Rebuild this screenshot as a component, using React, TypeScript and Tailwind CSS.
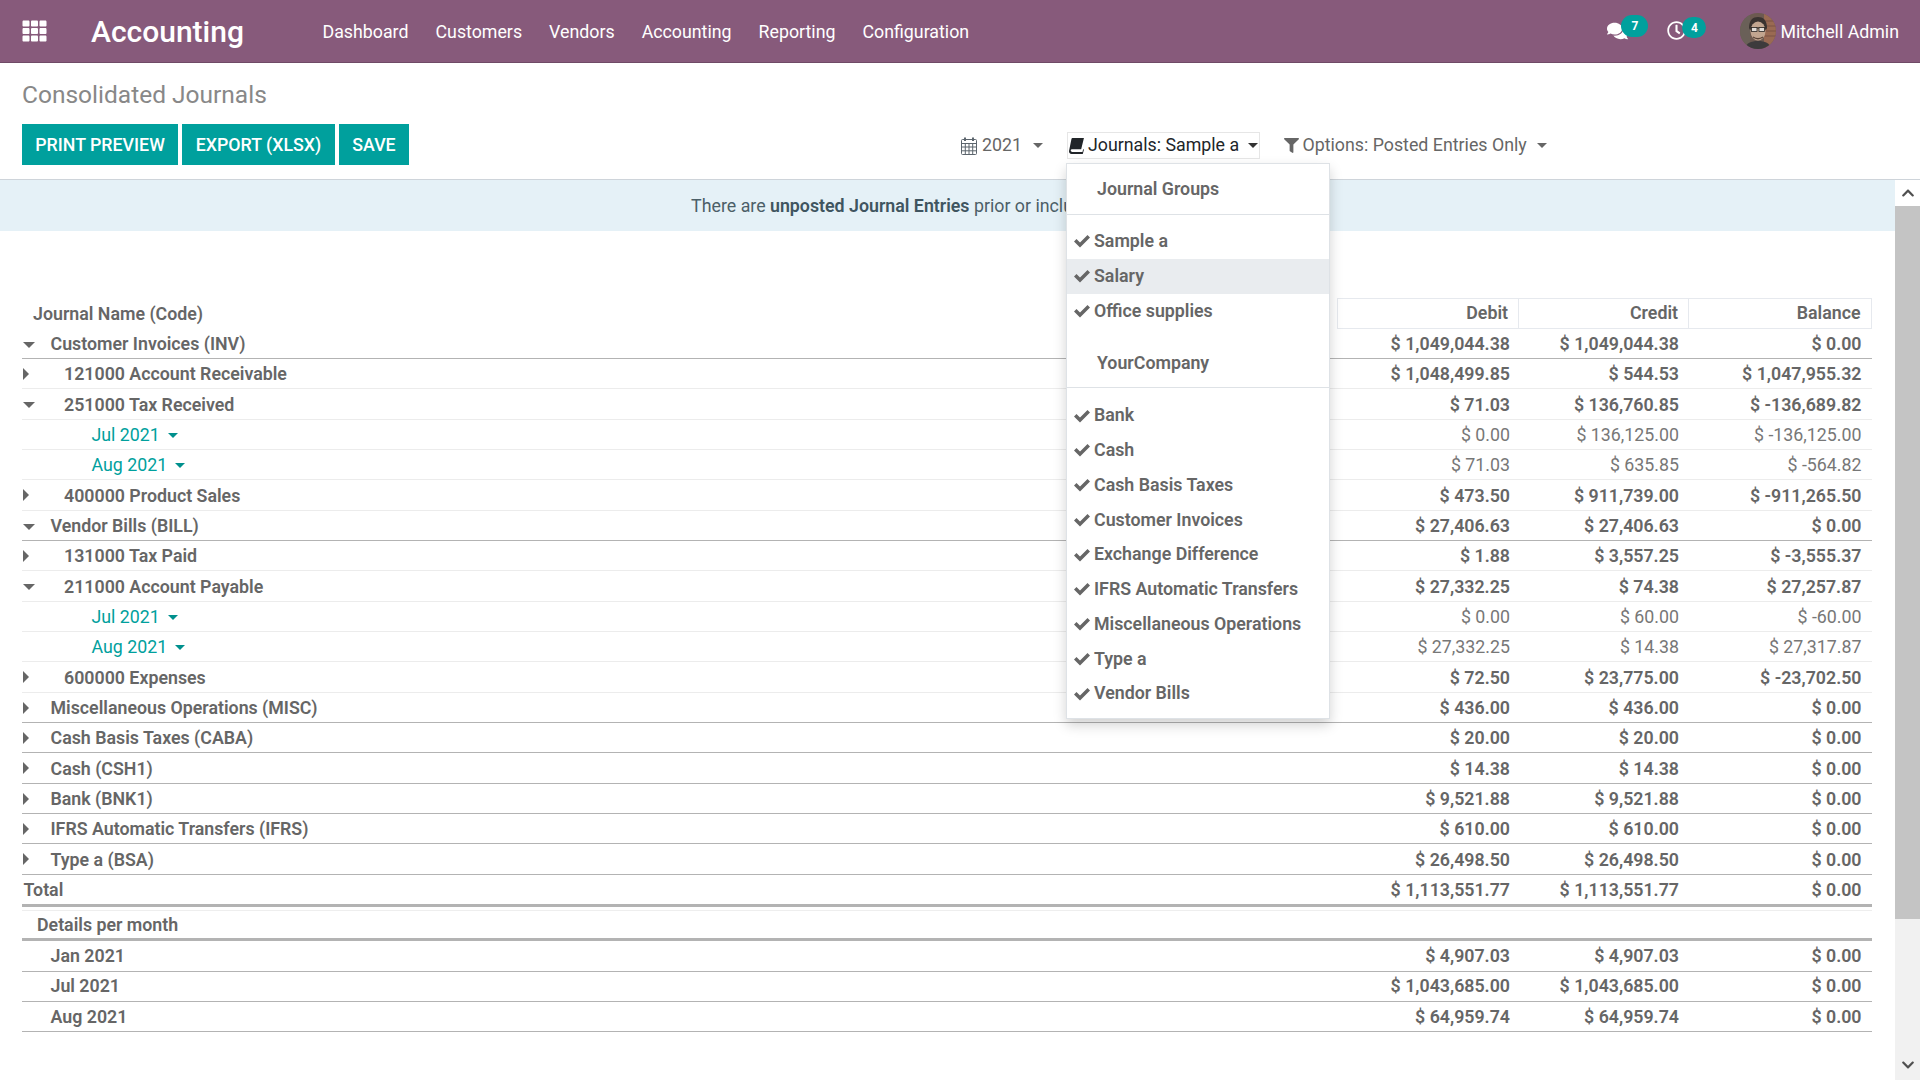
import React from "react";
import { FaTh, FaFilter, FaComments, FaRegClock, FaChevronUp, FaChevronDown } from "react-icons/fa";

type Row = {
  name: string; d: string; c: string; b: string; level: 0 | 1 | 2 | 3;
  caret?: "down" | "right"; line: "dark" | "light" | "thick"; plain?: boolean;
};

const rows: Row[] = [
  { name: "Customer Invoices (INV)", d: "$ 1,049,044.38", c: "$ 1,049,044.38", b: "$ 0.00", level: 0, caret: "down", line: "dark" },
  { name: "121000 Account Receivable", d: "$ 1,048,499.85", c: "$ 544.53", b: "$ 1,047,955.32", level: 1, caret: "right", line: "light" },
  { name: "251000 Tax Received", d: "$ 71.03", c: "$ 136,760.85", b: "$ -136,689.82", level: 1, caret: "down", line: "light" },
  { name: "Jul 2021", d: "$ 0.00", c: "$ 136,125.00", b: "$ -136,125.00", level: 2, line: "light", plain: true },
  { name: "Aug 2021", d: "$ 71.03", c: "$ 635.85", b: "$ -564.82", level: 2, line: "light", plain: true },
  { name: "400000 Product Sales", d: "$ 473.50", c: "$ 911,739.00", b: "$ -911,265.50", level: 1, caret: "right", line: "light" },
  { name: "Vendor Bills (BILL)", d: "$ 27,406.63", c: "$ 27,406.63", b: "$ 0.00", level: 0, caret: "down", line: "dark" },
  { name: "131000 Tax Paid", d: "$ 1.88", c: "$ 3,557.25", b: "$ -3,555.37", level: 1, caret: "right", line: "light" },
  { name: "211000 Account Payable", d: "$ 27,332.25", c: "$ 74.38", b: "$ 27,257.87", level: 1, caret: "down", line: "light" },
  { name: "Jul 2021", d: "$ 0.00", c: "$ 60.00", b: "$ -60.00", level: 2, line: "light", plain: true },
  { name: "Aug 2021", d: "$ 27,332.25", c: "$ 14.38", b: "$ 27,317.87", level: 2, line: "light", plain: true },
  { name: "600000 Expenses", d: "$ 72.50", c: "$ 23,775.00", b: "$ -23,702.50", level: 1, caret: "right", line: "light" },
  { name: "Miscellaneous Operations (MISC)", d: "$ 436.00", c: "$ 436.00", b: "$ 0.00", level: 0, caret: "right", line: "dark" },
  { name: "Cash Basis Taxes (CABA)", d: "$ 20.00", c: "$ 20.00", b: "$ 0.00", level: 0, caret: "right", line: "dark" },
  { name: "Cash (CSH1)", d: "$ 14.38", c: "$ 14.38", b: "$ 0.00", level: 0, caret: "right", line: "dark" },
  { name: "Bank (BNK1)", d: "$ 9,521.88", c: "$ 9,521.88", b: "$ 0.00", level: 0, caret: "right", line: "dark" },
  { name: "IFRS Automatic Transfers (IFRS)", d: "$ 610.00", c: "$ 610.00", b: "$ 0.00", level: 0, caret: "right", line: "dark" },
  { name: "Type a (BSA)", d: "$ 26,498.50", c: "$ 26,498.50", b: "$ 0.00", level: 0, caret: "right", line: "dark" },
  { name: "Total", d: "$ 1,113,551.77", c: "$ 1,113,551.77", b: "$ 0.00", level: 3, line: "thick" },
];

const months: [string, string, string][] = [
  ["Jan 2021", "$ 4,907.03", "$ 0.00"],
  ["Jul 2021", "$ 1,043,685.00", "$ 0.00"],
  ["Aug 2021", "$ 64,959.74", "$ 0.00"],
];

function CaretDown({ className = "" }: { className?: string }) {
  return <span className={`inline-block w-0 h-0 border-x-[5px] border-t-[5px] border-x-transparent ${className}`} />;
}
function Triangle({ dir }: { dir: "down" | "right" }) {
  return dir === "down" ? (
    <span className="absolute left-[1px] top-[13px] w-0 h-0 border-x-[6px] border-t-[6px] border-x-transparent border-t-[#666666]" />
  ) : (
    <span className="absolute left-[1px] top-[9px] w-0 h-0 border-y-[6px] border-l-[6px] border-y-transparent border-l-[#666666]" />
  );
}

function ReportRow({ r }: { r: Row }) {
  const lineCls = r.line === "dark" ? "h-[30.35px] pt-[2px] border-b border-[#b3b3b3]" : r.line === "thick" ? "h-[32.4px] pt-[1px] border-b-[3px] border-[#b3b3b3]" : "h-[30.35px] pt-[2px] border-b border-[#ececec]";
  const weight = r.plain ? "font-normal text-[#777777]" : "font-semibold text-[#666666]";
  const pad = r.level === 0 ? "pl-[28.5px]" : r.level === 1 ? "pl-[42px]" : r.level === 2 ? "pl-[69.5px]" : "pl-[1.5px]";
  return (
    <div className={`relative flex items-center ${lineCls} ${weight}`}>
      {r.caret && <Triangle dir={r.caret} />}
      <div className={`flex-1 flex items-center ${pad} ${r.plain ? "text-[#00a09d]" : ""}`}>
        {r.name}
        {r.plain && <CaretDown className="ml-[8px] border-t-[#00908d]" />}
      </div>
      <div className="w-[170px] text-right">{r.d}</div>
      <div className="w-[169px] text-right">{r.c}</div>
      <div className="w-[193px] pr-[10.5px] text-right">{r.b}</div>
    </div>
  );
}

function MonthRow({ m }: { m: [string, string, string] }) {
  return (
    <div className="flex items-center h-[30.35px] pt-[1px] border-b border-[#b3b3b3] font-semibold text-[#666666]">
      <div className="flex-1 pl-[28.5px]">{m[0]}</div>
      <div className="w-[170px] text-right">{m[1]}</div>
      <div className="w-[169px] text-right">{m[1]}</div>
      <div className="w-[193px] pr-[10.5px] text-right">{m[2]}</div>
    </div>
  );
}

function CheckIcon() {
  return (
    <svg viewBox="0 0 16 14" className="w-[16px] h-[14px] mr-[4px]" fill="#666666">
      <path d="M0 7.5 2.5 5 6 8.5 13.5 1 16 3.5 6 13.5Z" />
    </svg>
  );
}

function Group({ label, items, first }: { label: string; items: { t: string; hover?: boolean }[]; first?: boolean }) {
  return (
    <div>
      <div className={`flex items-center border-b border-[#dee2e6] pl-[30px] ${first ? "h-[51px]" : "h-[52px] pt-[3px]"}`}>{label}</div>
      <div className={first ? "pt-[9px] pb-[8px]" : "pt-[10px]"}>
        {items.map((it) => (
          <div key={it.t} className={`flex items-center h-[34.75px] pl-[7px] ${it.hover ? "bg-[#e9ecef]" : ""}`}>
            <CheckIcon />
            {it.t}
          </div>
        ))}
      </div>
    </div>
  );
}

function Avatar() {
  return (
    <svg viewBox="0 0 36 36" className="w-[36px] h-[36px] rounded-full">
      <rect width="36" height="36" fill="#6d5a50" />
      <rect x="24" y="0" width="12" height="36" fill="#9a6a52" />
      <path d="M25 8h11M25 13h11M25 18h11M25 23h11" stroke="#7b5244" strokeWidth="1" />
      <rect x="0" y="0" width="10" height="36" fill="#6a6058" />
      <path d="M9 15c0-8 4-11 9-11s9 3 9 11l-1 2H10z" fill="#3a3330" />
      <ellipse cx="18" cy="18" rx="7.5" ry="9.5" fill="#c2a58f" />
      <path d="M11 15h14" stroke="#2a2522" strokeWidth="1.2" />
      <rect x="11.5" y="14.5" width="5.5" height="4" fill="#e2ddd8" stroke="#2a2522" strokeWidth="0.8" />
      <rect x="19" y="14.5" width="5.5" height="4" fill="#e2ddd8" stroke="#2a2522" strokeWidth="0.8" />
      <path d="M13 24c3 2 7 2 10 0" stroke="#5b4438" strokeWidth="1.4" fill="none" />
      <path d="M5 36c1-6 6-8 13-8s12 2 13 8z" fill="#3d3b3c" />
    </svg>
  );
}

function BookIcon() {
  return (
    <svg viewBox="0 0 16 16" className="w-[17px] h-[17px]" fill="#212529">
      <path d="M4.2 1H15l-2.6 10.6H3.6C2.7 11.6 2.4 12.3 2.6 13c.2.6.7 1 1.4 1h9.6l.7-2.6.7.5L13.9 16H3.4C1.8 16 .6 14.6 1 12.9L3.2 2c.1-.6.5-1 1-1z" />
    </svg>
  );
}

function CalendarIcon() {
  return (
    <svg viewBox="0 0 16 18" className="w-[16px] h-[18px]" fill="none" stroke="#5c656d" strokeWidth="1">
      <rect x="0.5" y="2.5" width="15" height="15" rx="1" />
      <path d="M0.5 6.5h15M0.5 10h15M0.5 13.8h15M4.3 6.5v11M8 6.5v11M11.7 6.5v11" />
      <path d="M4 0.5v3.5M12 0.5v3.5" strokeWidth="2" />
    </svg>
  );
}

export default function App() {
  return (
    <div className="w-[1920px] h-[1080px] flex flex-col overflow-hidden bg-white text-[17.8px] font-['Roboto',sans-serif] text-[#666666] relative">
      {/* Navbar */}
      <nav className="h-[63px] shrink-0 bg-[#875a7b] border-b border-[#6f4a66] flex items-center text-white">
        <FaTh className="ml-[21px] w-[27px] h-[24px]" />
        <span className="ml-[43px] text-[30px] font-medium leading-none w-[231.5px] pt-[2px]">Accounting</span>
        <div className="flex gap-[27px] pt-[2px]">
          <span>Dashboard</span><span>Customers</span><span>Vendors</span><span>Accounting</span><span>Reporting</span><span>Configuration</span>
        </div>
        <div className="ml-auto flex items-center h-full">
          <div className="relative w-[60px] h-full">
            <FaComments className="absolute left-0 top-[21px] w-[21px] h-[20px]" />
            <span className="absolute left-[14px] top-[15px] w-[27px] h-[22px] rounded-full bg-[#00a09d] text-[12px] font-bold flex items-center justify-center">7</span>
          </div>
          <div className="relative w-[73px] h-full">
            <FaRegClock className="absolute left-0 top-[21px] w-[19px] h-[19px]" />
            <span className="absolute left-[15px] top-[17px] w-[24px] h-[21px] rounded-full bg-[#00a09d] text-[12px] font-bold flex items-center justify-center">4</span>
          </div>
          <Avatar />
          <span className="ml-[4px] mr-[21px] pt-[2px]">Mitchell Admin</span>
        </div>
      </nav>

      {/* Control panel */}
      <div className="h-[117px] shrink-0 border-b border-[#ced4da] px-[22px] relative">
        <div className="pt-[16px] text-[24.5px] leading-[32px] text-[#888888]">Consolidated Journals</div>
        <div className="flex items-center mt-[13px]">
          <div className="flex gap-[4px] w-[939px]">
            <button className="h-[41px] w-[156px] pt-[2px] bg-[#00a09d] text-white font-medium uppercase">Print Preview</button>
            <button className="h-[41px] w-[153px] pt-[2px] bg-[#00a09d] text-white font-medium uppercase">Export (xlsx)</button>
            <button className="h-[41px] w-[70px] pt-[2px] bg-[#00a09d] text-white font-medium uppercase">Save</button>
          </div>
          <div className="flex items-center whitespace-nowrap pt-[2px]">
            <CalendarIcon />
            <span className="ml-[5px]">2021</span>
            <CaretDown className="ml-[11px] border-t-[#666666]" />
            <div className="ml-[24px] h-[27px] w-[193px] shrink-0 border border-[#e6e6e6] flex items-center text-[#212529]">
              <BookIcon />
              <span className="ml-[3px]">Journals: Sample a</span>
              <CaretDown className="ml-[9px] border-t-[#333333]" />
            </div>
            <FaFilter className="ml-[24px] w-[15px] h-[15px]" />
            <span className="ml-[3.5px]">Options: Posted Entries Only</span>
            <CaretDown className="ml-[10px] border-t-[#666666]" />
          </div>
        </div>
      </div>

      {/* Main */}
      <div className="flex-1 flex min-h-0">
        <div className="flex-1 min-w-0">
          <div className="h-[51px] pt-[2px] pl-[5px] bg-[#e5f1f7] flex items-center justify-center text-[#4c5f68]">
            <span>There are <b className="font-semibold text-[#3f5560]">unposted Journal Entries</b> prior or included in this period</span>
          </div>
          <div className="ml-[22px] w-[1850px] pt-[67px]">
            <div className="flex h-[30.6px] font-semibold text-[#666666]">
              <div className="flex-1 pl-[11px] pt-[2px] flex items-center">Journal Name (Code)</div>
              <div className="flex w-[535px]">
                <div className="w-[182px] pt-[1px] border border-[#e6e9ee] flex items-center justify-end pr-[10px]">Debit</div>
                <div className="w-[170px] pt-[1px] border-y border-r border-[#e6e9ee] flex items-center justify-end pr-[10px]">Credit</div>
                <div className="w-[183px] pt-[1px] border-y border-r border-[#e6e9ee] flex items-center justify-end pr-[10.5px]">Balance</div>
              </div>
            </div>
            {rows.map((r, i) => <ReportRow key={i} r={r} />)}
            <div className="mt-[3px] h-[31px] pt-[1px] border-t border-[#eeeeee] border-b-[3px] border-b-[#b3b3b3] flex items-center pl-[15px] font-semibold">Details per month</div>
            {months.map((m) => <MonthRow key={m[0]} m={m} />)}
          </div>
        </div>
        {/* Scroll bar */}
        <div className="w-[25px] shrink-0 flex flex-col bg-[#f1f1f1]">
          <div className="h-[26px] bg-white flex items-center justify-center text-[#505050]"><FaChevronUp className="w-[14px] h-[14px]" /></div>
          <div className="h-[713px] bg-[#c4c4c4]" />
          <div className="flex-1 flex items-end justify-center pb-[8px] text-[#505050]"><FaChevronDown className="w-[14px] h-[14px]" /></div>
        </div>
      </div>

      {/* Journals dropdown */}
      <div className="absolute left-[1066px] top-[163px] w-[264px] h-[556px] bg-white border border-[#dee2e6] shadow-[0_6px_12px_rgba(0,0,0,0.18)] font-semibold text-[#666666]">
        <Group first label="Journal Groups" items={[{ t: "Sample a" }, { t: "Salary", hover: true }, { t: "Office supplies" }]} />
        <Group label="YourCompany" items={[{ t: "Bank" }, { t: "Cash" }, { t: "Cash Basis Taxes" }, { t: "Customer Invoices" }, { t: "Exchange Difference" }, { t: "IFRS Automatic Transfers" }, { t: "Miscellaneous Operations" }, { t: "Type a" }, { t: "Vendor Bills" }]} />
      </div>
    </div>
  );
}
